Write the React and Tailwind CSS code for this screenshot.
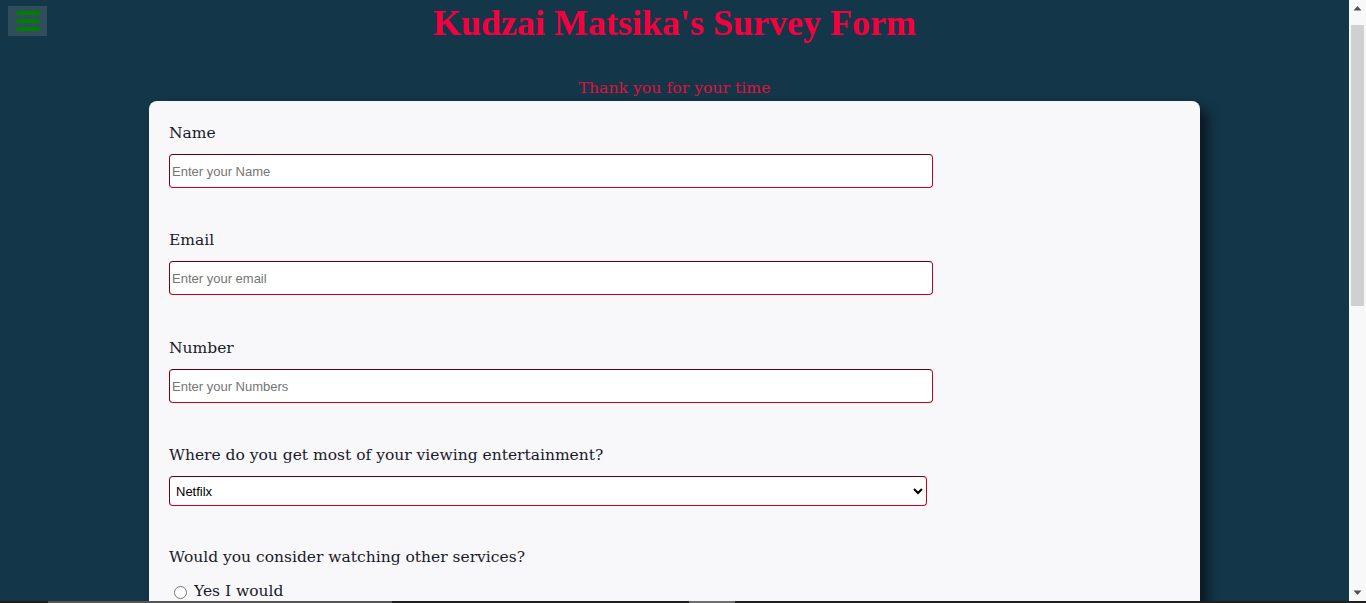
const serif = { fontFamily: '"DejaVu Serif", "Liberation Serif", serif' };
const sans = { fontFamily: '"Liberation Sans", Arial, sans-serif' };

function Field({ label, placeholder }) {
  return (
    <div className="mb-10">
      <label className="block h-6 text-[15.5px] leading-6 text-[#1a1a2a]">{label}</label>
      <input
        type="text"
        placeholder={placeholder}
        className="mt-[9px] block h-[34px] w-[764px] rounded-[4px] border border-[#c8001e] border-t-[#5a0012] border-l-[#7a0016] bg-white px-[2px] text-[13px] text-black outline-none placeholder:text-[#757575]"
        style={sans}
      />
    </div>
  );
}

function Radio({ name, label }) {
  return (
    <label className="flex h-6 items-center">
      <input type="radio" name={name} className="ml-[5px] mr-[7px] h-[13px] w-[13px]" />
      <span className="text-[15.5px] text-[#1a1a2a]">{label}</span>
    </label>
  );
}

function Scrollbar() {
  return (
    <div className="flex w-[17px] shrink-0 flex-col items-center bg-[#f8f8f8]">
      <svg width="17" height="17" viewBox="0 0 17 17" className="shrink-0">
        <path d="M4.5 10.5 L8.5 6 L12.5 10.5 Z" fill="#505050" />
      </svg>
      <div className="mt-2 h-[281px] w-[13px] bg-[#d0d0d0]" />
      <div className="flex-1" />
      <svg width="17" height="17" viewBox="0 0 17 17" className="shrink-0">
        <path d="M4.5 6.5 L8.5 11 L12.5 6.5 Z" fill="#505050" />
      </svg>
    </div>
  );
}

export default function App() {
  return (
    <div className="flex h-screen flex-col overflow-hidden bg-[#133649]" style={serif}>
      <div className="flex min-h-0 flex-1">
        <main className="relative min-w-0 flex-1 overflow-hidden pb-10">
          <button className="absolute left-2 top-[6px] flex h-[30px] w-[39px] flex-col items-center justify-center gap-1 bg-[#2f4d5a]">
            <span className="block h-1 w-6 rounded-sm bg-[#008000]" />
            <span className="block h-1 w-6 rounded-sm bg-[#008000]" />
            <span className="block h-1 w-6 rounded-sm bg-[#008000]" />
          </button>

          <header className="pt-[3px] text-center">
            <h1
              className="text-[36px] font-bold leading-[41px] text-[#f5003f]"
              style={{ fontFamily: '"Liberation Serif", "DejaVu Serif", serif' }}
            >
              Kudzai Matsika's Survey Form
            </h1>
            <p className="mt-[33px] text-[15.7px] leading-[22px] text-[#e0103c]">Thank you for your time</p>
          </header>

          <form className="mx-auto mt-[2px] w-[1051px] rounded-lg bg-[#f8f8fa] px-5 pb-8 pt-5 shadow-[8px_8px_12px_rgba(0,0,0,0.55)]">
            <Field label="Name" placeholder="Enter your Name" />
            <Field label="Email" placeholder="Enter your email" />
            <div className="h-px" />
            <Field label="Number" placeholder="Enter your Numbers" />

            <div className="mb-[39px]">
              <label className="block h-6 text-[15.5px] leading-6 text-[#1a1a2a]">
                Where do you get most of your viewing entertainment?
              </label>
              <select
                className="mt-[9px] block h-[30px] w-[758px] rounded-[4px] border border-[#c8001e] border-t-[#5a0012] border-l-[#7a0016] bg-white px-[2px] text-[13px] text-black outline-none"
                style={sans}
                defaultValue="netflix"
              >
                <option value="netflix">Netfilx</option>
                <option value="showmax">Showmax</option>
                <option value="dstv">DStv</option>
                <option value="youtube">YouTube</option>
              </select>
            </div>

            <div className="mb-10">
              <p className="h-6 text-[15.5px] leading-6 text-[#1a1a2a]">Would you consider watching other services?</p>
              <div className="mt-[11px] flex flex-col gap-1">
                <Radio name="other" label="Yes I would" />
                <Radio name="other" label="No I wouldn't" />
                <Radio name="other" label="Maybe" />
              </div>
            </div>

            <div className="mb-10">
              <p className="h-6 text-[15.5px] leading-6 text-[#1a1a2a]">Any other comments?</p>
              <textarea
                className="mt-[10px] block h-24 w-[764px] rounded-[4px] border border-[#c8001e] bg-white p-1 text-[13px] outline-none"
                placeholder="Enter your comments"
                style={sans}
              />
            </div>

            <button type="button" className="rounded bg-[#f5003f] px-6 py-2 text-white">Submit</button>
          </form>
        </main>
        <Scrollbar />
      </div>
      <div className="flex h-[2px] shrink-0 bg-[#1e1e1e]">
        <div className="ml-[48px] w-[344px] bg-[#555555]" />
        <div className="ml-[297px] w-[46px] bg-[#6e6e6e]" />
      </div>
    </div>
  );
}
